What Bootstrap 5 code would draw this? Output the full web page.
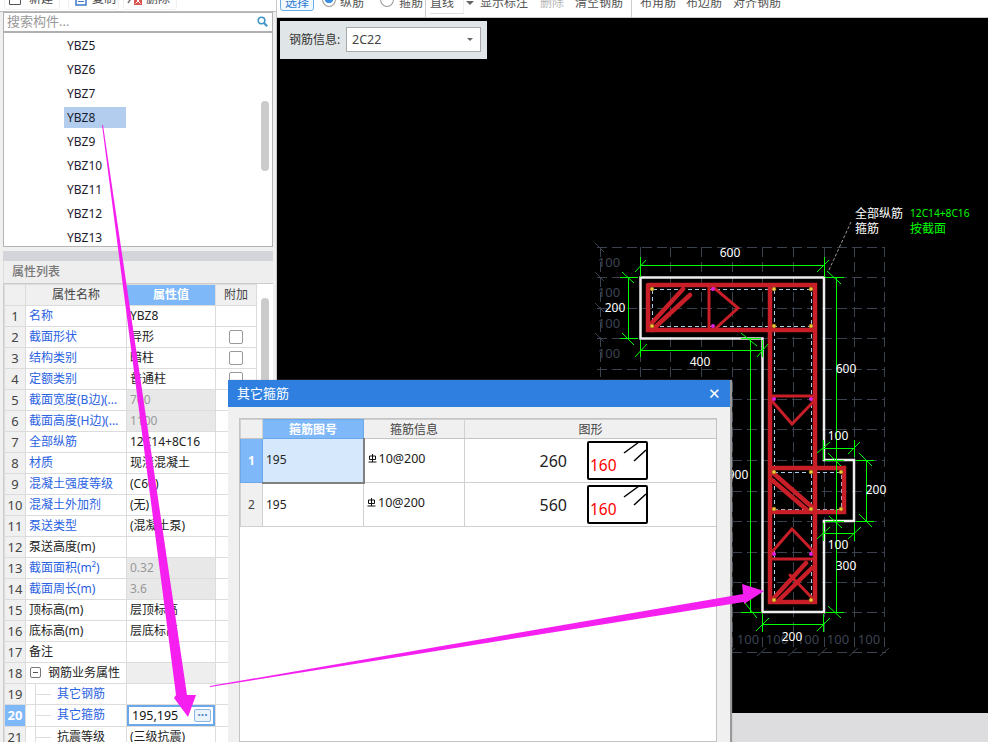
<!DOCTYPE html>
<html lang="zh">
<head>
<meta charset="utf-8">
<title>其它箍筋</title>
<link href="https://cdn.jsdelivr.net/npm/bootstrap@5.3.0/dist/css/bootstrap.min.css" rel="stylesheet">
<style>
html,body{height:742px;overflow:hidden}
body{font:12px/20px "Noto Sans","Noto Sans CJK SC",sans-serif;color:#222;background:#f0f0f0;position:relative}
.side-pane{width:277px;height:742px;overflow:hidden;border-right:1px solid #c8c8c8;flex:none}
.main-pane{width:711px;height:742px}
.side-tools{height:12px;background:#fff;overflow:hidden;padding-left:4px;border-bottom:1px solid #bbb}
.tool-chip{height:22px;margin-top:-12px;line-height:22px;padding:0 6px;border:1px solid #f0f0f0;border-radius:3px;color:#444;font-size:12px;white-space:nowrap}
.chip-a{margin-right:4px;padding-left:4px}
.chip-b{padding-right:2px;gap:5px}
.chip-c{padding-left:3px}
.search-box{height:21px;margin:0 3px;background:#fff;border:1px solid #b0b0b0;border-width:1px 1px 2px;padding:0 4px 0 3px;color:#999;font-size:13px;line-height:19px}
.part-list{height:215px;margin:0 3px;background:#fff;border:1px solid #b4b4b4;border-top:0;overflow:hidden;position:relative}
.part-row{height:24px;padding:2px 0 0 60px}
.part-name{display:block;width:62px;height:21px;line-height:21px;padding-left:3px;color:#1b1b2e}
.part-on{background:#b2cdee}
.thumb-bar{position:absolute;background:#cbcbcb;border-radius:4px;width:8px}
.list-bar{left:257px;top:68px;height:70px}
.prop-head{margin:4px 3px 0;height:10px;background:#d4d5da}
.prop-title{margin:0 3px;height:23px;line-height:21px;background:#eee;padding-left:8px;color:#777;font-weight:500;border-bottom:1px solid #ccc;border-left:1px solid #ddd}
.prop-wrap{margin:0 3px;background:#fff;height:460px;position:relative;border-left:1px solid #ccc;overflow:hidden}
.prop-grid{width:252px;table-layout:fixed;margin:0;border-collapse:collapse;font-size:12px;color:#222}
.prop-grid td,.prop-grid th{height:21px;padding:0 3px;line-height:20px;border:1px solid #dcdcdc;font-weight:400;white-space:nowrap;overflow:hidden;background:#fff;box-shadow:none;vertical-align:middle}
.prop-grid thead th{height:21px;background:#f0f0f0;text-align:center;color:#444;padding:0}
.prop-grid .idx{background:#f0f0f0;text-align:center;padding:0;color:#444;font-size:13px}
.prop-grid .hot{background:#7fb8f8;color:#fff;font-weight:700}
.prop-grid .lnk{color:#2a62e2}
.prop-grid .off{background:#e8e8e8;color:#999}
.prop-grid .band{background:#eeeeee}
.prop-grid .leaf{padding-left:31px;background:linear-gradient(#ddd,#ddd) 9px 0/1px 100% no-repeat,linear-gradient(#ddd,#ddd) 9px 10px/16px 1px no-repeat,#fff}
.prop-grid .editor{padding:0}
.pc-a{width:21px}.pc-b{width:101px}.pc-c{width:89px}.pc-d{width:41px}
.edit-box{height:21px;border:2px solid #6aa8ea;padding:0 2px 0 3px;line-height:17px;color:#111;font-size:12.5px}
.dot-btn{width:17px;height:13px;border:1px solid #8cb6e4;border-radius:2px;background:#eaf2fb;color:#4f86c2;font-size:12px;line-height:9px;text-align:center;font-weight:700}
.tick-box{display:block;width:14px;height:14px;margin:0 auto;border:1px solid #999;border-radius:2px;background:#fff}
.fold-box{display:inline-block;width:11px;height:11px;border:1px solid #777;border-radius:2px;margin:0 7px 0 1px;position:relative;top:1px;background:linear-gradient(#555,#555) center/5px 1px no-repeat}
.prop-bar{left:257px;top:14px;height:300px}
.top-strip{height:18px;background:#fff;border-bottom:1px solid #c9c9c9;overflow:hidden;flex:none;color:#555;padding-left:3px}
.strip-item{margin-top:-9px;height:23px;line-height:23px;white-space:nowrap;flex:none}
.strip-pick{width:34px;text-align:center;border:1px solid #6aaee8;border-radius:3px;color:#2b7bd0;background:#f2f9ff;height:20px;line-height:22px}
.strip-radio{width:14px;height:16px;border-radius:50%;border:1px solid #999;background:#fff;display:inline-block;flex:none;margin-top:-9px}
.radio-on{background:radial-gradient(circle,#3b8ee0 0 4px,#fff 4.5px)}
.strip-sep{width:1px;height:18px;background:#ccc;flex:none}
.sp-r1{margin-left:8px}.sp-t1{margin-left:4px}.sp-r2{margin-left:16px}.sp-t2{margin-left:5px}.sp-s1{margin-left:2px}
.strip-line{margin-left:4px;width:34px;border-right:1px solid #eee;border-bottom:1px solid #ddd}
.strip-caret{flex:none;margin:1px 0 0 2px;width:0;height:0;border:4px solid transparent;border-top-color:#666;border-bottom:0}
.sp-a{margin-left:6px}.sp-b{margin-left:12px;color:#b5b5b5}.sp-c{margin-left:11px}.sp-s2{margin-left:8px}.sp-d{margin-left:8px}.sp-e{margin-left:10px}.sp-f{margin-left:11px}
.draw-area{height:695px;background:#000;position:relative;flex:none}
.draw-area svg{display:block}
.rebar-panel{position:absolute;left:3px;top:3px;width:207px;height:38px;background:#e0e6e8;padding:6px 6px 7px 9px;color:#333}
.rebar-select{width:135px;height:25px;border:1px solid #aaa;background:#fff;padding:0 5px;line-height:23px;color:#444;font-size:12.5px}
.caret-down{width:0;height:0;border:3.5px solid transparent;border-top-color:#666;border-bottom:0;margin-right:2px}
.status-strip{height:29px;background:#dddde0;flex:none}
.win-box{position:absolute;left:228px;top:380px;width:502px;height:362px;background:#f0f0f0;box-shadow:2px 0 1px #999}
.win-title{height:27px;background:#2e7fe0;color:#fff;font-size:13px;line-height:27px;padding:0 9px}
.win-close{font-size:15px;line-height:27px}
.win-body{margin:11px 12px 0 11px;width:478px;height:324px;background:#fff;border:1px solid #c4c4c4;overflow:hidden}
.win-grid{table-layout:fixed;width:476px;margin:0;border-collapse:collapse}
.win-grid td,.win-grid th{padding:0 3px;border:1px solid #d0d0d0;font-weight:400;background:#fff;height:44px;color:#222;box-shadow:none;vertical-align:middle}
.win-grid thead th{height:19px;line-height:17px;background:#f0f0f0;text-align:center;color:#444;border-bottom:1px solid #c4c4c4;padding:0}
.win-grid thead .hot,.win-grid tbody .hot{background:#7fb8f8;color:#fff;font-weight:700;text-align:center;border:1px solid #6aa8ea}
.win-grid .idx{background:#f0f0f0;text-align:center;padding:0;color:#444}
.win-grid .cur{background:#d5e8fc;border-right:2px solid #808080;border-bottom:2px solid #808080}
.wc-a{width:22px}.wc-b{width:101px}.wc-c{width:101px}.wc-d{width:252px}
.bar-info{position:relative;top:-2px;font-size:12.5px;gap:2px}
.num-big{font-size:16px;width:99px;text-align:right;margin-right:20px;flex:none}
.shape-box{flex:none;display:block}
.mark-layer{position:absolute;left:0;top:0;pointer-events:none}
</style>
</head>
<body class="d-flex">

<aside class="side-pane d-flex flex-column">
  <div class="side-tools d-flex gap-1">
    <span class="tool-chip chip-a d-flex gap-2 align-items-center"><svg width="12" height="20" viewBox="0 0 12 20"><path d="M.5 0v15.500h11V0M3 9.500h6" fill="none" stroke="#555"/></svg>新建</span>
    <span class="tool-chip chip-b d-flex align-items-center"><svg width="12" height="20" viewBox="0 0 12 20"><rect x="1" y="0" width="10" height="16" fill="#fff" stroke="#3a78c8" stroke-width="1.500"/><path d="M3 9.500h6M3 12.500h6" stroke="#3a78c8"/></svg>复制</span>
    <span class="tool-chip chip-c d-flex gap-1 align-items-center"><svg width="15" height="20" viewBox="0 0 15 20"><path d="M1 14 9 2" stroke="#777" stroke-width="1.500"/><rect x="7" y="8" width="8" height="8" fill="#d9534f"/><path d="m8.500 9.500 5 5m0-5-5 5" stroke="#fff"/></svg>删除</span>
  </div>
  <div class="search-box d-flex justify-content-between align-items-center">
    <span>搜索构件...</span>
    <svg width="11" height="11" viewBox="0 0 11 11"><circle cx="4.500" cy="4.500" r="3.300" fill="none" stroke="#3d94c8" stroke-width="1.600"/><path d="m7 7 3.200 3.200" stroke="#3d94c8" stroke-width="2"/></svg>
  </div>
  <div class="part-list">
    <div class="part-row"><span class="part-name">YBZ5</span></div>
    <div class="part-row"><span class="part-name">YBZ6</span></div>
    <div class="part-row"><span class="part-name">YBZ7</span></div>
    <div class="part-row"><span class="part-name part-on">YBZ8</span></div>
    <div class="part-row"><span class="part-name">YBZ9</span></div>
    <div class="part-row"><span class="part-name">YBZ10</span></div>
    <div class="part-row"><span class="part-name">YBZ11</span></div>
    <div class="part-row"><span class="part-name">YBZ12</span></div>
    <div class="part-row"><span class="part-name">YBZ13</span></div>
    <span class="thumb-bar list-bar"></span>
  </div>
  <div class="prop-head"></div>
  <div class="prop-title">属性列表</div>
  <div class="prop-wrap">
    <table class="table prop-grid">
      <colgroup><col class="pc-a"><col class="pc-b"><col class="pc-c"><col class="pc-d"></colgroup>
      <thead><tr><th></th><th>属性名称</th><th class="hot">属性值</th><th>附加</th></tr></thead>
      <tbody>
        <tr><td class="idx">1</td><td class="lnk">名称</td><td>YBZ8</td><td></td></tr>
        <tr><td class="idx">2</td><td class="lnk">截面形状</td><td>异形</td><td><span class="tick-box"></span></td></tr>
        <tr><td class="idx">3</td><td class="lnk">结构类别</td><td>暗柱</td><td><span class="tick-box"></span></td></tr>
        <tr><td class="idx">4</td><td class="lnk">定额类别</td><td>普通柱</td><td><span class="tick-box"></span></td></tr>
        <tr><td class="idx">5</td><td class="lnk">截面宽度(B边)(...</td><td class="off">700</td><td></td></tr>
        <tr><td class="idx">6</td><td class="lnk">截面高度(H边)(...</td><td class="off">1100</td><td></td></tr>
        <tr><td class="idx">7</td><td class="lnk">全部纵筋</td><td>12C14+8C16</td><td></td></tr>
        <tr><td class="idx">8</td><td class="lnk">材质</td><td>现浇混凝土</td><td></td></tr>
        <tr><td class="idx">9</td><td class="lnk">混凝土强度等级</td><td>(C60)</td><td></td></tr>
        <tr><td class="idx">10</td><td class="lnk">混凝土外加剂</td><td>(无)</td><td></td></tr>
        <tr><td class="idx">11</td><td class="lnk">泵送类型</td><td>(混凝土泵)</td><td></td></tr>
        <tr><td class="idx">12</td><td>泵送高度(m)</td><td></td><td></td></tr>
        <tr><td class="idx">13</td><td class="lnk">截面面积(m²)</td><td class="off">0.32</td><td></td></tr>
        <tr><td class="idx">14</td><td class="lnk">截面周长(m)</td><td class="off">3.6</td><td></td></tr>
        <tr><td class="idx">15</td><td>顶标高(m)</td><td>层顶标高</td><td></td></tr>
        <tr><td class="idx">16</td><td>底标高(m)</td><td>层底标高</td><td></td></tr>
        <tr><td class="idx">17</td><td>备注</td><td></td><td></td></tr>
        <tr><td class="idx">18</td><td><span class="fold-box"></span>钢筋业务属性</td><td class="band"></td><td></td></tr>
        <tr><td class="idx">19</td><td class="lnk leaf">其它钢筋</td><td></td><td></td></tr>
        <tr><td class="idx hot">20</td><td class="lnk leaf">其它箍筋</td><td class="editor"><div class="edit-box d-flex justify-content-between align-items-center"><span>195,195</span><span class="dot-btn">···</span></div></td><td></td></tr>
        <tr><td class="idx">21</td><td class="leaf">抗震等级</td><td>(三级抗震)</td><td></td></tr>
      </tbody>
    </table>
    <span class="thumb-bar prop-bar"></span>
  </div>
</aside>

<main class="main-pane d-flex flex-column">
  <div class="top-strip d-flex align-items-start">
    <span class="strip-item strip-pick">选择</span>
    <span class="strip-radio radio-on sp-r1"></span><span class="strip-item sp-t1">纵筋</span>
    <span class="strip-radio sp-r2"></span><span class="strip-item sp-t2">箍筋</span>
    <span class="strip-sep sp-s1"></span>
    <span class="strip-item strip-line">直线</span><span class="strip-caret"></span>
    <span class="strip-item sp-a">显示标注</span>
    <span class="strip-item sp-b">删除</span>
    <span class="strip-item sp-c">清空钢筋</span>
    <span class="strip-sep sp-s2"></span>
    <span class="strip-item sp-d">布角筋</span>
    <span class="strip-item sp-e">布边筋</span>
    <span class="strip-item sp-f">对齐钢筋</span>
  </div>
  <div class="draw-area">
    <svg width="711" height="695" viewBox="277 18 711 695" font-family="'Noto Sans','Noto Sans CJK SC',sans-serif" font-size="12">
      <g fill="none" stroke="#3a4250" stroke-dasharray="10 5" shape-rendering="crispEdges">
        <path d="M600.500 247V652M640.500 247V652M670.500 247V652M701.500 247V652M732.500 247V652M762.500 247V652M793.500 247V652M824.500 247V652M854.500 247V652M884.500 247V652"/>
        <path d="M597 247.500H884M597 277.500H884M597 308.500H884M597 338.500H884M597 369.500H884M597 399.500H884M597 429.500H884M597 460.500H884M597 491.500H884M597 521.500H884M597 552.500H884M597 582.500H884M597 612.500H884M597 652.500H886"/>
      </g>
      <path d="M595 243l9 9M595 272l9 9M595 303l9 9M595 333l9 9M726 656l9-8M757 656l9-8M788 656l9-8M818 656l9-8M849 656l9-8M880 656l9-8" stroke="#3a4250"/>
      <g fill="#3c4352" font-size="13" text-anchor="middle">
        <text x="609" y="267">100</text><text x="609" y="297">100</text><text x="609" y="328">100</text><text x="609" y="358">100</text>
        <text x="748" y="644">100</text><text x="777" y="644">100</text><text x="808" y="644">100</text><text x="838" y="644">100</text><text x="869" y="644">100</text>
      </g>
      <path d="M640.500 277.500H824V460H854V521H824V612H762.500V338.500H640.500Z" fill="none" stroke="#eee" stroke-width="2.500"/>
      <path d="M652.500 289.500H811.500V598M652.500 326.500H770M811.500 326.500H774M774.500 289.500V598M774 600.500H811M774 472.500H841.500V509.500H774M652.500 289.500V326" fill="none" stroke="#a9cdea" stroke-dasharray="4 3" shape-rendering="crispEdges"/>
      <g fill="none" stroke="#c81e28" stroke-linecap="round">
        <path stroke-width="4.500" d="M648 285H815V602H770V285M648 285V330H815M770 468H844V512H770"/>
        <path stroke-width="3" d="M709 286V329M712 286 738 308 715 329M772 396H814M772 401 792 424 814 401M772 552 792 529 814 552M772 559H814"/>
        <path stroke-width="4.500" d="M650 325 683 289M652 330 690 295M772 472 812 507M772 480 807 510M772 600 806 563M777 602 812 568"/>
        <path stroke-width="3" d="M790 575 814 600"/>
      </g>
      <g fill="#f5c838" stroke="#7a5a10" stroke-width=".5">
        <circle cx="652" cy="289" r="2"/><circle cx="652" cy="326" r="2"/><circle cx="774" cy="289" r="2"/><circle cx="774" cy="326" r="2"/><circle cx="811" cy="289" r="2"/><circle cx="811" cy="326" r="2"/>
        <circle cx="774" cy="472" r="2"/><circle cx="811" cy="472" r="2"/><circle cx="841" cy="472" r="2"/><circle cx="774" cy="509" r="2"/><circle cx="811" cy="509" r="2"/><circle cx="841" cy="509" r="2"/><circle cx="774" cy="600" r="2"/><circle cx="811" cy="600" r="2"/>
      </g>
      <g fill="#e020e0">
        <circle cx="713" cy="289" r="2"/><circle cx="713" cy="326" r="2"/><circle cx="774" cy="399" r="2"/><circle cx="811" cy="399" r="2"/><circle cx="774" cy="554" r="2"/><circle cx="811" cy="554" r="2"/>
      </g>
      <g fill="none" stroke="#0f0" shape-rendering="crispEdges">
        <path d="M640 265.500H824M640.500 257V277M824.500 257V277M628.500 277V338M620 277.500H638M620 338.500H638M640 350.500H763M640.500 340V357M762.500 340V357"/>
        <path d="M750.500 338V612M741 338.500H761M741 612.500H762M836.500 277V612M825 277.500H844M825 460.500H844M825 521.500H844M825 612.500H844"/>
        <path d="M824 448.500H854M823.500 440V460M854.500 440V457M866.500 460V521M856 460.500H874M856 521.500H874M824 533.500H854M823.500 523V541M854.500 523V541M762 624.500H824M762.500 614V632M823.500 614V632"/>
      </g>
      <path d="M635 272 646 260M817 272 829 260M622 272 634 283M622 333 634 345M635 357 647 344M757 357 768 344M741 333 757 346M745 603 757 618M827 271 841 284M828 453 841 466M829 516 842 528M828 606 841 618M817 453 830 442M848 454 860 442M859 453 872 466M859 514 872 527M817 539 830 527M848 539 861 527M756 631 769 618M817 631 830 618" stroke="#0f0"/>
      <path d="M829 270 851 222" stroke="#999" stroke-dasharray="3 2"/>
      <g fill="#fff" text-anchor="middle">
        <text x="730" y="257">600</text><text x="615" y="312">200</text><text x="700" y="366">400</text><text x="846" y="373">600</text><text x="738" y="479">900</text>
        <text x="838" y="440">100</text><text x="876" y="494">200</text><text x="838" y="549">100</text><text x="846" y="570">300</text><text x="792" y="641">200</text>
      </g>
      <g fill="#fff"><text x="855" y="218">全部纵筋</text><text x="855" y="233">箍筋</text></g>
      <g fill="#0f0"><text x="910" y="217" font-size="10.200">12C14+8C16</text><text x="910" y="233">按截面</text></g>
    </svg>
    <div class="rebar-panel d-flex align-items-center justify-content-between">
      <span>钢筋信息:</span>
      <div class="rebar-select d-flex align-items-center justify-content-between"><span>2C22</span><span class="caret-down"></span></div>
    </div>
  </div>
  <div class="status-strip"></div>
</main>

<section class="win-box">
  <div class="win-title d-flex justify-content-between"><span>其它箍筋</span><span class="win-close">✕</span></div>
  <div class="win-body">
    <table class="table win-grid">
      <colgroup><col class="wc-a"><col class="wc-b"><col class="wc-c"><col class="wc-d"></colgroup>
      <thead><tr><th></th><th class="hot">箍筋图号</th><th>箍筋信息</th><th>图形</th></tr></thead>
      <tbody>
        <tr>
          <td class="idx hot">1</td><td class="cur">195</td>
          <td><span class="bar-info d-flex align-items-center"><svg width="9" height="9" viewBox="0 0 9 9"><path d="M1.500 2v3.500h6V2ZM4.500 0v8M.500 8h8" fill="none" stroke="#111"/></svg>10@200</span></td>
          <td><div class="d-flex align-items-center"><span class="num-big">260</span><svg class="shape-box" width="61" height="39" viewBox="0 0 61 39"><rect x="1" y="1" width="59" height="37" rx="1" fill="#fff" stroke="#000" stroke-width="2"/><path d="M37 12 52 1M47 20 59 9" stroke="#000" stroke-width="1.500"/><text x="3" y="30" fill="#f00" font-size="15.500" font-family="'Noto Sans',sans-serif">160</text></svg></div></td>
        </tr>
        <tr>
          <td class="idx">2</td><td>195</td>
          <td><span class="bar-info d-flex align-items-center"><svg width="9" height="9" viewBox="0 0 9 9"><path d="M1.500 2v3.500h6V2ZM4.500 0v8M.500 8h8" fill="none" stroke="#111"/></svg>10@200</span></td>
          <td><div class="d-flex align-items-center"><span class="num-big">560</span><svg class="shape-box" width="61" height="39" viewBox="0 0 61 39"><rect x="1" y="1" width="59" height="37" rx="1" fill="#fff" stroke="#000" stroke-width="2"/><path d="M37 12 52 1M47 20 59 9" stroke="#000" stroke-width="1.500"/><text x="3" y="30" fill="#f00" font-size="15.500" font-family="'Noto Sans',sans-serif">160</text></svg></div></td>
        </tr>
      </tbody>
    </table>
  </div>
</section>

<svg class="mark-layer" width="988" height="742" viewBox="0 0 988 742">
  <path d="M102 125 103 125 187 695 196 695 188 717 174 698 176 695Z" fill="#f520f0"/>
  <path d="M210 686 743 594 742 584 764 591 744 604 744 602 210 687Z" fill="#f520f0"/>
</svg>
</body>
</html>
